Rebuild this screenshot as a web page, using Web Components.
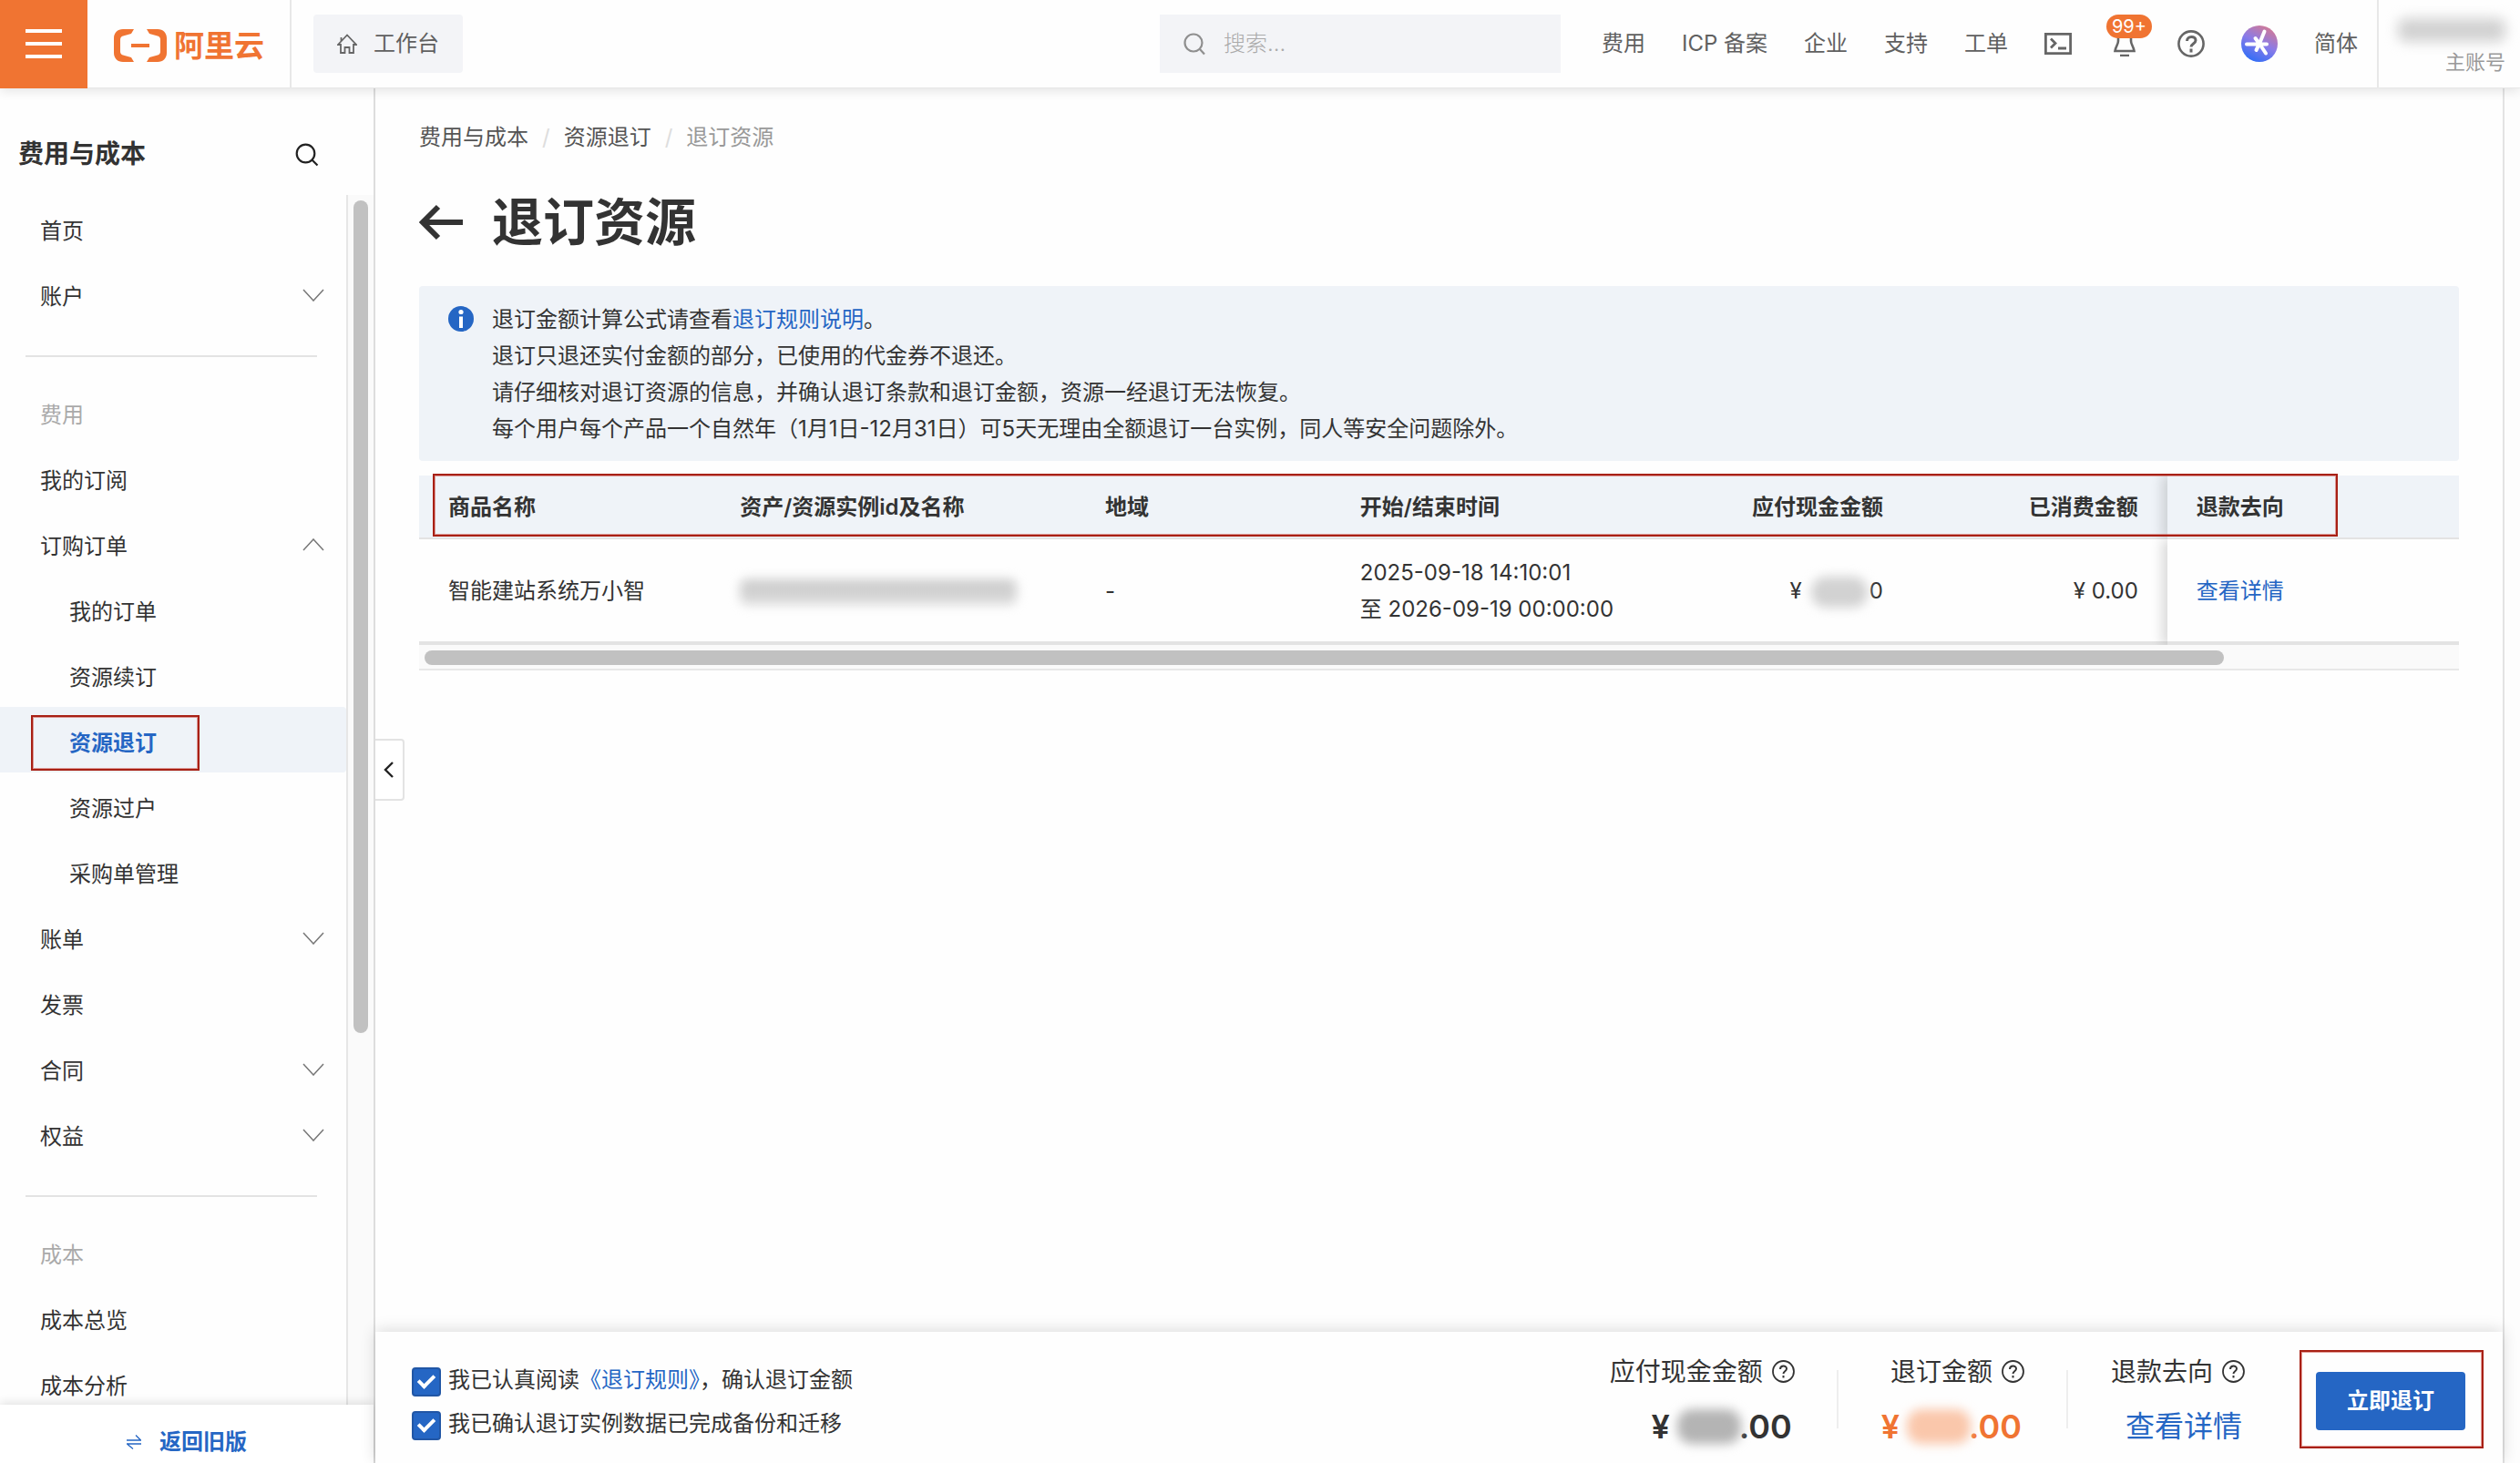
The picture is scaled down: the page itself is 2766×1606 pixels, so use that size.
<!DOCTYPE html>
<html lang="zh-CN">
<head>
<meta charset="utf-8">
<title>退订资源</title>
<style>
  html, body { height: 100%; margin: 0; }
  body {
    font-family: Inter, "Noto Sans CJK SC", sans-serif;
    font-size: 24px;
    line-height: 40px;
    color: #333;
    background: #fefefe;
    --brand: #f07432;
    --blue: #2566c4;
    --line: #e3e3e3;
    --tint: #eff3f8;
    --mark: #a82014;
    --mark-soft: inset 0 0 0 1px rgba(200, 60, 50, .5);
  }
</style>
</head>
<body>
<console-app>
  <console-header slot="header"></console-header>
  <side-nav slot="nav"></side-nav>
  <refund-page></refund-page>
  <refund-bar slot="footer"></refund-bar>
</console-app>

<script>
const define = (name, html) => {
  const template = document.createElement('template');
  template.innerHTML = html;
  customElements.define(name, class extends HTMLElement {
    connectedCallback() {
      if (this.shadowRoot) return;
      this.attachShadow({ mode: 'open' }).append(template.content.cloneNode(true));
    }
  });
};

// Page shell
define('console-app', `
  <style>
    :host { display: flex; flex-direction: column; height: 100vh; overflow: hidden; }
    .body { flex: 1; min-height: 0; display: flex; }
    main { flex: 1; min-width: 0; display: flex; flex-direction: column; position: relative; }
    .content { flex: 1; min-height: 0; }
    .gutter { flex: none; width: 17px; border-left: 2px solid var(--line); background: #fdfdfd; }
    .collapse {
      position: absolute; left: 0; top: 714px; width: 32px; height: 68px; padding: 0;
      display: flex; align-items: center; justify-content: center;
      border: 2px solid var(--line); border-left: 0; border-radius: 0 4px 4px 0; background: #fff;
    }
  </style>
  <slot name="header"></slot>
  <div class="body">
    <slot name="nav"></slot>
    <main>
      <div class="content"><slot></slot></div>
      <slot name="footer"></slot>
      <button class="collapse" aria-label="收起菜单">
        <svg width="12" height="18" viewBox="0 0 12 18" fill="none" stroke="#222" stroke-width="2.4"><path d="M10 1 2 9l8 8"/></svg>
      </button>
    </main>
    <div class="gutter"></div>
  </div>
`);

define('console-header', `
  <style>
    :host {
      display: flex; align-items: center; height: 96px; flex: none; position: relative; z-index: 2;
      color: #606060; background: #fefefe; border-bottom: 1px solid #e8e8e8;
      box-shadow: 0 2px 12px rgba(0, 0, 0, .12);
    }
    button { font: inherit; color: inherit; border: 0; padding: 0; background: none; }
    a { color: inherit; text-decoration: none; white-space: nowrap; }
    svg { display: block; flex: none; }
    .menu { width: 96px; height: 97px; background: var(--brand); display: flex; align-items: center; justify-content: center; }
    .logo {
      display: flex; align-items: center; gap: 8px; box-sizing: border-box; width: 224px; height: 96px; padding: 4px 0 0 29px;
      border-right: 2px solid #e8e8e8; color: var(--brand); font-size: 33px; font-weight: 600;
    }
    .bench {
      display: flex; align-items: center; justify-content: center; gap: 18px;
      width: 164px; height: 64px; margin: 0 24px; border-radius: 4px; background: #f3f4f7;
    }
    .search {
      display: flex; align-items: center; gap: 20px; box-sizing: border-box;
      width: 440px; height: 64px; padding: 0 26px; margin-left: auto; background: #f3f4f7;
    }
    input { flex: 1; min-width: 0; border: 0; padding: 0; font: inherit; background: none; outline: 0; }
    input::placeholder { color: #aaa; font-weight: 300; opacity: 1; }
    nav { display: flex; align-items: center; gap: 40px; margin: 0 21px 0 45px; }
    .bell { position: relative; margin: 0 2px; }
    .badge {
      position: absolute; left: -4px; top: -18px; width: 50px; height: 26px; border-radius: 13px;
      background: var(--brand); color: #fff; font-size: 20px; line-height: 26px; text-align: center;
    }
    .account {
      box-sizing: border-box; width: 157px; height: 96px; padding: 20px 16px 0 0; border-left: 2px solid #e8e8e8;
      display: flex; flex-direction: column; align-items: flex-end;
      color: #999; font-size: 22px; line-height: 40px;
    }
    .veil { width: 118px; height: 26px; margin-bottom: 2px; border-radius: 8px; background: #d2d2d2; filter: blur(7px); }
  </style>
  <button class="menu" aria-label="菜单">
    <svg width="40" height="32" viewBox="0 0 40 32" stroke="#fff" stroke-width="4"><path d="M0 2h40M0 16h40M0 30h40"/></svg>
  </button>
  <a class="logo" href="#">
    <svg width="58" height="36" viewBox="0 0 58 36" fill="#f07432">
      <path d="M22 0H10C4 0 0 4 0 10v16c0 6 4 10 10 10h12l-3-5-9-2.600c-2-.6-3-2-3-4V11.600c0-2 1-3.400 3-4L19 5z"/>
      <path d="M36 0h12c6 0 10 4 10 10v16c0 6-4 10-10 10H36l3-5 9-2.600c2-.6 3-2 3-4V11.600c0-2-1-3.400-3-4L39 5z"/>
      <path d="M19 16h20v4H19z"/>
    </svg>
    <span>阿里云</span>
  </a>
  <a class="bench" href="#">
    <svg width="22" height="22" viewBox="0 0 22 22" fill="none" stroke="#666" stroke-width="1.800"><path d="M1 12 11 1.500 21 12h-3v9h-4.500v-6h-5v6H4v-9zM4.500 8V4"/></svg>
    <span>工作台</span>
  </a>
  <label class="search">
    <svg width="24" height="26" viewBox="0 0 24 26" fill="none" stroke="#8f8f8f" stroke-width="2.200"><circle cx="11" cy="12" r="9.500"/><path d="m18 19 5 5.500"/></svg>
    <input type="text" placeholder="搜索..." aria-label="搜索">
  </label>
  <nav>
    <a href="#">费用</a>
    <a href="#">ICP 备案</a>
    <a href="#">企业</a>
    <a href="#">支持</a>
    <a href="#">工单</a>
    <button aria-label="云命令行">
      <svg width="30" height="24" viewBox="0 0 30 24" fill="none" stroke="#666" stroke-width="2.800"><path d="M1.400 1.400h27.200v21.200H1.400zM7 6.500l5 5-5 5M15 17h9"/></svg>
    </button>
    <button class="bell" aria-label="消息">
      <svg width="32" height="28" viewBox="0 0 32 28" fill="none" stroke="#666" stroke-width="2.600"><path d="M9 2v9c0 4-2.500 5-3.500 11h21C25.500 16 23 15 23 11V2M11 27h10"/></svg>
      <span class="badge">99+</span>
    </button>
    <button aria-label="帮助">
      <svg width="30" height="30" viewBox="0 0 30 30" fill="none" stroke="#666"><circle cx="15" cy="15" r="13.600" stroke-width="2.600"/><path d="M10.500 12c0-6 9.500-6 9.500-.8 0 3.800-5 3.600-5 7.300M15 20.500v4" stroke-width="3"/></svg>
    </button>
    <button aria-label="AI 助理">
      <svg width="40" height="40" viewBox="0 0 40 40">
        <defs><linearGradient id="g" x1=".8" y1="0" x2=".3" y2="1"><stop offset="0" stop-color="#d8798e"/><stop offset=".5" stop-color="#8a7be8"/><stop offset="1" stop-color="#2f6df6"/></linearGradient></defs>
        <circle cx="20" cy="20" r="20" fill="url(#g)"/>
        <path d="M25.500 6.500 20 20M6 20.500h22M20 20l7 10.500M15.500 14l4.500 6-3.500 7" fill="none" stroke="#fff" stroke-width="4" stroke-linecap="round"/>
      </svg>
    </button>
    <a href="#">简体</a>
  </nav>
  <div class="account"><div class="veil"></div><span>主账号</span></div>
`);

// One row of the side menu: level="2" for nested rows, arrow="down|up" for groups
customElements.define('nav-item', class extends HTMLElement {
  connectedCallback() {
    const arrow = this.getAttribute('arrow');
    const d = arrow === 'up' ? 'M1 13 12 1l11 12' : 'M1 1l11 12L23 1';
    this.attachShadow({ mode: 'open' }).innerHTML = `
      <style>
        :host { display: block; position: relative; }
        a {
          display: flex; align-items: center; justify-content: space-between; box-sizing: border-box;
          height: 72px; padding: 8px 24px 0 44px; color: #333; text-decoration: none;
        }
        svg { margin-bottom: 4px; }
        :host([level="2"]) a { padding-left: 76px; }
        :host([caption]) a { color: #aaa; }
        :host([current]) a { color: var(--blue); background: var(--tint); font-weight: 600; border-radius: 0 4px 4px 0; }
        :host([current])::after {
          content: ""; position: absolute; left: 34px; top: 9px; width: 181px; height: 57px;
          border: 2px solid var(--mark); box-shadow: var(--mark-soft);
        }
      </style>
      <a href="#"><slot></slot>${arrow ? `<svg width="24" height="14" viewBox="0 0 24 14" fill="none" stroke="#777" stroke-width="1.500"><path d="${d}"/></svg>` : ''}</a>
    `;
  }
});

define('side-nav', `
  <style>
    :host { display: flex; flex-direction: column; flex: none; box-sizing: border-box; width: 412px; border-right: 2px solid #ddd; }
    header { display: flex; align-items: center; justify-content: space-between; height: 117px; padding: 0 60px 0 20px; }
    h2 { margin: 0; padding-top: 26px; font-size: 28px; font-weight: 600; }
    header button { border: 0; padding: 32px 0 0; background: none; }
    .scroll { flex: 1; min-height: 0; display: flex; }
    .list { flex: 1; min-width: 0; overflow: hidden; }
    hr { height: 2px; margin: 32px 32px 24px 28px; border: 0; background: var(--line); }
    .track { flex: none; box-sizing: border-box; width: 30px; padding: 6px 6px 0; border-left: 2px solid #e6e6e6; background: #fafafa; }
    .thumb { width: 16px; height: 914px; border-radius: 8px; background: #c1c1c1; }
    footer {
      position: relative; display: flex; align-items: center; justify-content: center; gap: 20px; box-sizing: border-box;
      height: 64px; padding-top: 18px; background: #fff; box-shadow: 0 -2px 10px rgba(0, 0, 0, .12);
    }
    footer a { color: var(--blue); font-weight: 600; text-decoration: none; }
  </style>
  <header>
    <h2>费用与成本</h2>
    <button aria-label="搜索菜单">
      <svg width="26" height="26" viewBox="0 0 26 26" fill="none" stroke="#222" stroke-width="2.200"><circle cx="11.500" cy="11.500" r="9.800"/><path d="m18.500 18.500 6 6"/></svg>
    </button>
  </header>
  <div class="scroll">
    <div class="list">
      <nav-item>首页</nav-item>
      <nav-item arrow="down">账户</nav-item>
      <hr>
      <nav-item caption>费用</nav-item>
      <nav-item>我的订阅</nav-item>
      <nav-item arrow="up">订购订单</nav-item>
      <nav-item level="2">我的订单</nav-item>
      <nav-item level="2">资源续订</nav-item>
      <nav-item level="2" current>资源退订</nav-item>
      <nav-item level="2">资源过户</nav-item>
      <nav-item level="2">采购单管理</nav-item>
      <nav-item arrow="down">账单</nav-item>
      <nav-item>发票</nav-item>
      <nav-item arrow="down">合同</nav-item>
      <nav-item arrow="down">权益</nav-item>
      <hr>
      <nav-item caption>成本</nav-item>
      <nav-item>成本总览</nav-item>
      <nav-item>成本分析</nav-item>
    </div>
    <div class="track"><div class="thumb"></div></div>
  </div>
  <footer>
    <svg width="16" height="16" viewBox="0 0 16 16" fill="none" stroke="#2566c4" stroke-width="1.300"><path d="M0 6h15.500L10 .5M16 10H.5L7 15.500"/></svg>
    <a href="#">返回旧版</a>
  </footer>
`);

define('page-notice', `
  <style>
    :host { display: flex; gap: 20px; padding: 17px 32px 15px; border-radius: 4px; background: var(--tint); }
    svg { flex: none; margin-top: 5px; }
  </style>
  <svg width="28" height="28" viewBox="0 0 28 28"><circle cx="14" cy="14" r="14" fill="#2566c4"/><circle cx="14" cy="6.500" r="2.600" fill="#fff"/><path d="M12 11.500h4V24h-4z" fill="#fff"/></svg>
  <div><slot></slot></div>
`);

define('order-table', `
  <style>
    :host { display: block; position: relative; }
    table { width: 100%; border-collapse: separate; border-spacing: 0; table-layout: fixed; }
    th, td { box-sizing: border-box; padding: 2px 32px 0; text-align: left; white-space: nowrap; }
    th { height: 70px; background: var(--tint); border-bottom: 2px solid var(--line); font-weight: 600; }
    td { height: 116px; border-bottom: 4px solid var(--line); }
    .num { text-align: right; }
    .fixed { box-shadow: -6px 0 12px rgba(0, 0, 0, .14); clip-path: inset(0 0 0 -24px); background: #fefefe; }
    th.fixed { background: var(--tint); }
    a { color: var(--blue); text-decoration: none; }
    .veil { display: inline-block; vertical-align: middle; height: 28px; border-radius: 8px; background: linear-gradient(#c8c8c8, #dcdcdc); filter: blur(6px); }
    .id { width: 304px; }
    .sum { width: 62px; margin: 0 2px 0 10px; height: 34px; border-radius: 16px; background: #d2d2d2; }
    .track { height: 20px; padding: 6px 6px 0; border-bottom: 2px solid #e8e8e8; background: #fafafa; }
    .thumb { width: 88.700%; height: 16px; border-radius: 8px; background: #c1c1c1; }
    .mark { position: absolute; left: 15px; right: 133px; top: -2px; height: 65px; border: 2px solid var(--mark); box-shadow: var(--mark-soft); }
  </style>
  <table>
    <colgroup><col style="width:14.300%"><col style="width:17.900%"><col style="width:12.500%"><col style="width:16.100%"><col style="width:12.400%"><col style="width:12.500%"><col></colgroup>
    <thead>
      <tr><th>商品名称</th><th>资产/资源实例id及名称</th><th>地域</th><th>开始/结束时间</th><th class="num">应付现金金额</th><th class="num">已消费金额</th><th class="fixed">退款去向</th></tr>
    </thead>
    <tbody>
      <tr>
        <td>智能建站系统万小智</td>
        <td><span class="veil id"></span></td>
        <td>-</td>
        <td>2025-09-18 14:10:01<br>至 2026-09-19 00:00:00</td>
        <td class="num">¥<span class="veil sum"></span>0</td>
        <td class="num">¥ 0.00</td>
        <td class="fixed"><a href="#">查看详情</a></td>
      </tr>
    </tbody>
  </table>
  <div class="track"><div class="thumb"></div></div>
  <div class="mark"></div>
`);

define('refund-page', `
  <style>
    :host { display: block; padding: 34px 48px 0; }
    .crumbs { display: flex; gap: 15px; color: #555; }
    .crumbs a { color: inherit; text-decoration: none; }
    .crumbs i { color: #ddd; font-style: normal; }
    .crumbs span { color: #999; }
    .title { display: flex; align-items: center; gap: 32px; margin: 33px 0 30px; }
    .title button { border: 0; padding: 0; background: none; }
    svg { display: block; }
    h1 { margin: 0; font-size: 56px; line-height: 80px; font-weight: 600; }
    order-table { margin-top: 16px; }
    p { margin: 0; }
    p a { color: var(--blue); text-decoration: none; }
  </style>
  <nav class="crumbs"><a href="#">费用与成本</a><i>/</i><a href="#">资源退订</a><i>/</i><span>退订资源</span></nav>
  <div class="title">
    <button aria-label="返回">
      <svg width="48" height="40" viewBox="0 0 48 40" fill="none" stroke="#333" stroke-width="6"><path d="M48 20H5M21 3 4 20l17 17"/></svg>
    </button>
    <h1>退订资源</h1>
  </div>
  <page-notice>
    <p>退订金额计算公式请查看<a href="#">退订规则说明</a>。</p>
    <p>退订只退还实付金额的部分，已使用的代金券不退还。</p>
    <p>请仔细核对退订资源的信息，并确认退订条款和退订金额，资源一经退订无法恢复。</p>
    <p>每个用户每个产品一个自然年（1月1日-12月31日）可5天无理由全额退订一台实例，同人等安全问题除外。</p>
  </page-notice>
  <order-table></order-table>
`);

// Caption with a help mark above a slotted value
define('sum-item', `
  <style>
    :host { display: flex; flex-direction: column; align-items: flex-end; gap: 20px; }
    .label { display: flex; align-items: center; gap: 10px; font-size: 28px; }
    .value { display: flex; align-items: center; font-size: 36px; font-weight: 600; padding-right: 3px; }
    :host([accent]) .value { color: var(--brand); --veil: #fac7ab; }
    ::slotted(a) { color: var(--blue); font-size: 32px; font-weight: 400; text-decoration: none; }
    ::slotted(i) { width: 70px; height: 38px; margin: 0 -2px 0 8px; border-radius: 16px; background: var(--veil, #b4b4b4); filter: blur(6px); }
  </style>
  <div class="label"><slot name="label"></slot>
    <svg width="25" height="25" viewBox="0 0 25 25" fill="none" stroke="#333" stroke-width="1.800"><circle cx="12.500" cy="12.500" r="11.500"/><path d="M9 10c0-4.500 7-4.500 7-.5 0 2.700-3.500 2.700-3.500 5.500M12.500 17v2.500" stroke-width="2"/></svg>
  </div>
  <div class="value"><slot></slot></div>
`);

define('refund-bar', `
  <style>
    :host {
      display: flex; align-items: center; justify-content: space-between; flex: none; position: relative;
      height: 144px; padding: 0 41px 0 40px; background: #fefefe; box-shadow: 0 -2px 16px rgba(0, 0, 0, .14);
    }
    .agree { display: flex; flex-direction: column; gap: 8px; padding-top: 14px; }
    .agree div { display: flex; align-items: center; gap: 8px; }
    label { padding-bottom: 4px; line-height: 36px; }
    input {
      appearance: none; box-sizing: border-box; width: 32px; height: 32px; margin: 4px 0; border: 2px solid #2156a5; border-radius: 4px;
      background: var(--blue); display: grid; place-items: center;
    }
    input::after {
      content: ""; width: 18px; height: 11px; margin-top: -5px; box-sizing: border-box;
      border: solid #fff; border-width: 0 0 4px 4px; transform: rotate(-45deg);
    }
    a { color: var(--blue); text-decoration: none; }
    .sums { display: flex; align-items: center; padding-top: 3px; }
    .rule { width: 2px; height: 64px; margin: 0 47px 0 46px; background: #eee; }
    .go { position: relative; margin: 4px 0 0 78px; display: flex; }
    .go button { width: 164px; height: 64px; border: 0; border-radius: 4px; background: var(--blue); color: #fff; font: inherit; font-weight: 600; }
    .go::after { content: ""; position: absolute; inset: -24px -20px -20px -18px; border: 2px solid var(--mark); box-shadow: var(--mark-soft); pointer-events: none; }
  </style>
  <div class="agree">
    <div><input type="checkbox" id="rule" checked><label for="rule">我已认真阅读<a href="#">《退订规则》</a>，确认退订金额</label></div>
    <div><input type="checkbox" id="backup" checked><label for="backup">我已确认退订实例数据已完成备份和迁移</label></div>
  </div>
  <div class="sums">
    <sum-item><span slot="label">应付现金金额</span>¥<i></i>.00</sum-item>
    <div class="rule"></div>
    <sum-item accent><span slot="label">退订金额</span>¥<i></i>.00</sum-item>
    <div class="rule"></div>
    <sum-item><span slot="label">退款去向</span><a href="#">查看详情</a></sum-item>
    <div class="go"><button>立即退订</button></div>
  </div>
`);
</script>
</body>
</html>
